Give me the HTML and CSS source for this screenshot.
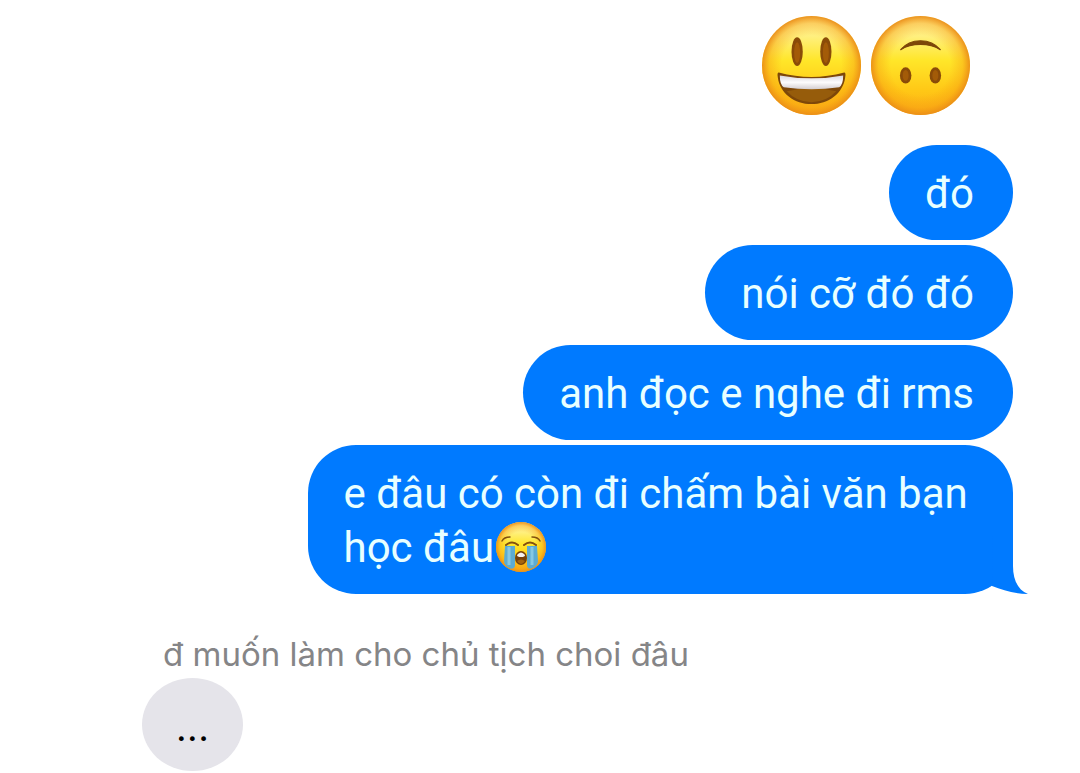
FILE: index.html
```html
<!DOCTYPE html>
<html lang="vi">
<head>
    <meta charset="UTF-8">
    <meta name="viewport" content="width=device-width, initial-scale=1.0">
    <title>Messages</title>
    <link rel="stylesheet" href="styles.css">
</head>
<body>

    <main class="chat">

        <!-- Large emoji message -->
        <div class="emoji-message">
            <svg class="emoji-large" viewBox="0 0 100 100" role="img" aria-label="😃">
                <defs>
                    <linearGradient id="face" x1="0" y1="0" x2="0" y2="1">
                        <stop offset="0" stop-color="#fff3a0"/>
                        <stop offset="0.2" stop-color="#fff080"/>
                        <stop offset="0.45" stop-color="#ffe629"/>
                        <stop offset="0.75" stop-color="#ffc816"/>
                        <stop offset="1" stop-color="#fcae15"/>
                    </linearGradient>
                    <radialGradient id="rim">
                        <stop offset="0.6" stop-color="#f59a12" stop-opacity="0"/>
                        <stop offset="0.85" stop-color="#f59a12" stop-opacity="0.4"/>
                        <stop offset="1" stop-color="#ea8d18" stop-opacity="0.95"/>
                    </radialGradient>
                    <linearGradient id="teeth" x1="0" y1="0" x2="0" y2="1">
                        <stop offset="0" stop-color="#d9d6dc"/>
                        <stop offset="0.5" stop-color="#fdfcfd"/>
                        <stop offset="1" stop-color="#d3cdd0"/>
                    </linearGradient>
                </defs>
                <circle cx="50" cy="50" r="50" fill="url(#face)"/>
                <circle cx="50" cy="50" r="50" fill="url(#rim)"/>
                <ellipse cx="35.500" cy="36" rx="5.700" ry="14.500" fill="#8a4b08"/>
                <ellipse cx="64.500" cy="36" rx="5.700" ry="14.500" fill="#8a4b08"/>
                <ellipse cx="35.500" cy="37" rx="3" ry="10.500" fill="#a35b08"/>
                <ellipse cx="64.500" cy="37" rx="3" ry="10.500" fill="#a35b08"/>
                <path d="M17 57Q50 66 83 57Q85 57 84 62C82 78 67 89 50 89S18 78 16 62Q15 57 17 57Z" fill="#7d4709"/>
                <path d="M25 76Q50 70 75 76Q65 87 50 87T25 76Z" fill="#965c0b"/>
                <path d="M18 60Q50 66 82 60Q82 69 78 72Q50 76 22 72Q18 69 18 60Z" fill="url(#teeth)"/>
            </svg>
            <svg class="emoji-large" viewBox="0 0 100 100" role="img" aria-label="🙃">
                <circle cx="50" cy="50" r="50" fill="url(#face)"/>
                <circle cx="50" cy="50" r="50" fill="url(#rim)"/>
                <path d="M30 34C40 22 60 22 70 34C59 27 41 27 30 34Z" fill="#7d4709" stroke="#7d4709" stroke-width="1.200" stroke-linejoin="round"/>
                <ellipse cx="35" cy="60" rx="5.800" ry="8.200" fill="#8a4b08"/>
                <ellipse cx="65" cy="60" rx="5.800" ry="8.200" fill="#8a4b08"/>
                <ellipse cx="35" cy="60" rx="3" ry="5.500" fill="#a35b08"/>
                <ellipse cx="65" cy="60" rx="3" ry="5.500" fill="#a35b08"/>
            </svg>
        </div>

        <!-- Sent messages -->
        <p class="bubble sent">đó</p>
        <p class="bubble sent">nói cỡ đó đó</p>
        <p class="bubble sent">anh đọc e nghe đi rms</p>
        <div class="bubble sent">
            e đâu có còn đi chấm bài văn bạn học đâu<svg class="emoji-inline" viewBox="0 0 50 50" role="img" aria-label="😭">
                <circle cx="25" cy="25" r="25" fill="url(#face)"/>
                <circle cx="25" cy="25" r="25" fill="url(#rim)"/>
                <path d="M9 24H19V44Q18 48 13 46Q8 43 8 39Z" fill="#5cabd2"/>
                <path d="M31 24H41L42 39Q42 43 37 46Q32 48 31 44Z" fill="#5cabd2"/>
                <path d="M13 25V43M36 25V43" stroke="#86c8e3" stroke-width="3"/>
                <path d="M6 19Q8 15 14 15M44 19Q42 15 36 15" fill="none" stroke="#84500f" stroke-width="1.500" stroke-linecap="round"/>
                <path d="M10 23Q16 18 22 23M28 23Q34 18 40 23" fill="none" stroke="#84500f" stroke-width="2" stroke-linecap="round"/>
                <ellipse cx="25" cy="36" rx="6" ry="7" fill="#74400b"/>
                <path d="M21 33Q25 28 29 33Q29 35 25 35T21 33Z" fill="#f5f2f0"/>
                <path d="M21 39Q25 36 29 39Q27 42 25 42T21 39Z" fill="#a8650e"/>
            </svg>
            <svg class="tail" viewBox="0 0 49 60" aria-hidden="true">
                <path class="tail-gap" d="M0 59Q7 56 12 51Q26 59 48 59L49 60H0Z"/>
                <path class="tail-shape" d="M13 0H33V31C33 45 38 55 48 59C34 59 23 55 12 51Z"/>
            </svg>
        </div>

        <!-- Received message -->
        <p class="sender">đ muốn làm cho chủ tịch choi đâu</p>
        <p class="bubble received">...</p>

    </main>

</body>
</html>
```

FILE: styles.css
```css
* {
    box-sizing: border-box;
}

body {
    margin: 0;
    background: #fff;
    font-family: Roboto, Inter, sans-serif;
}

.chat {
    display: flex;
    flex-direction: column;
    align-items: flex-end;
    gap: 5px;
    padding: 16px 67px 0 142px;
}

/* Emoji sent without a bubble */
.emoji-message {
    display: flex;
    gap: 10px;
    margin: 0 43px 25px 0;
}

.emoji-large {
    width: 99px;
    height: 99px;
}

/* Message bubbles */
.bubble {
    position: relative;
    max-width: 81%;
    margin: 0;
    padding: 22px 39px 19px 36px;
    border-radius: 48px;
    font-size: 42px;
    line-height: 54px;
}

.sent {
    background: #007aff;
    color: #e8ffff;
}

.received {
    align-self: flex-start;
    padding: 22px 34px 17px;
    border-radius: 50%;
    background: #e5e4ea;
    color: #000;
}

.emoji-inline {
    width: 50px;
    height: 50px;
    margin: 0 2px;
    vertical-align: -10px;
}

/* Pointed corner of the last bubble */
.tail {
    position: absolute;
    right: -16px;
    bottom: -1px;
    width: 49px;
    height: 60px;
}

.tail-shape {
    fill: #007aff;
}

.tail-gap {
    fill: #fff;
}

/* Name above the received message */
.sender {
    align-self: flex-start;
    margin: 36px 0 0 21px;
    color: #858587;
    font-family: Inter, Roboto, sans-serif;
    font-size: 33px;
    line-height: 38px;
}
```
